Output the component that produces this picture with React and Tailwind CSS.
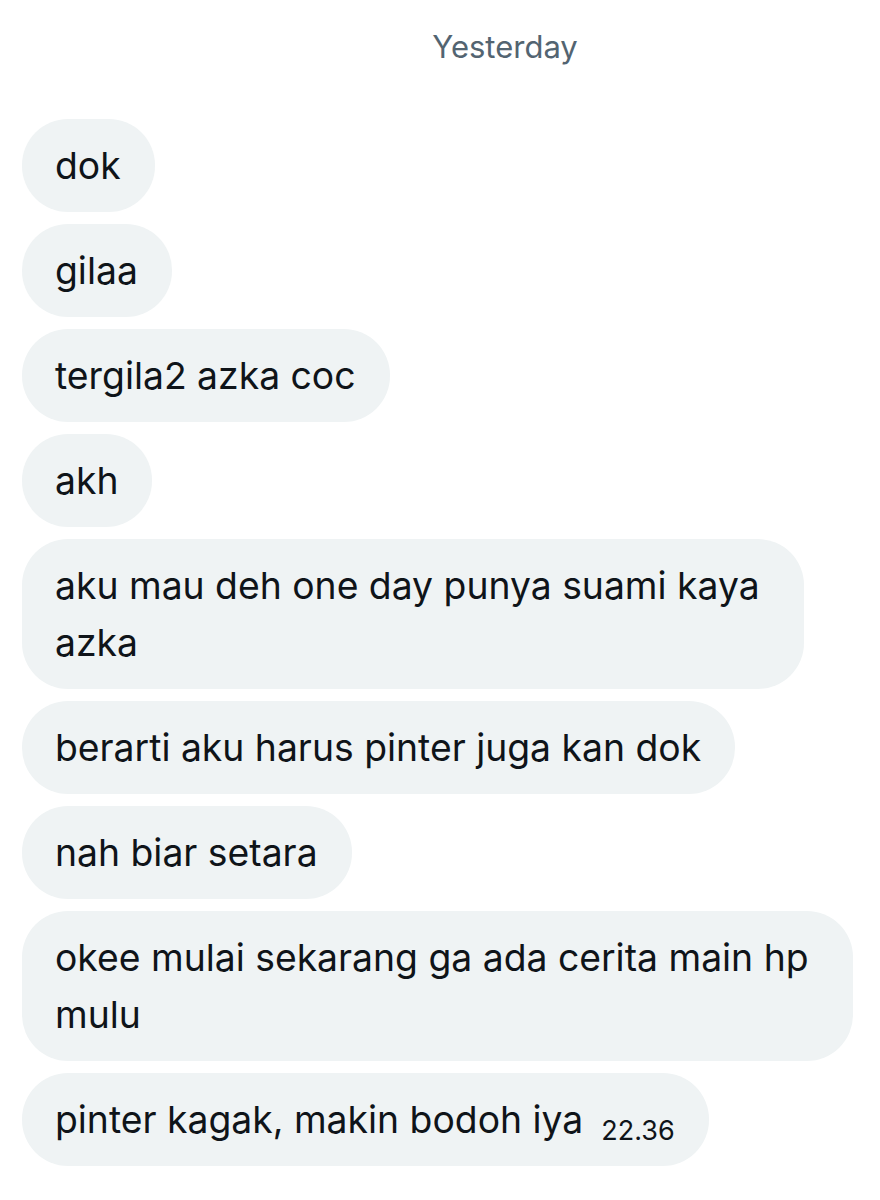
import React from "react";

const messages = [
  { t: ["dok"] },
  { t: ["gilaa"] },
  { t: ["tergila2 azka coc"] },
  { t: ["akh"] },
  { t: ["aku mau deh one day punya suami kaya", "azka"] },
  { t: ["berarti aku harus pinter juga kan dok"] },
  { t: ["nah biar setara"] },
  { t: ["okee mulai sekarang ga ada cerita main hp", "mulu"] },
];

export default function App() {
  return (
    <div
      className="w-[880px] h-[1200px] bg-white overflow-hidden"
      style={{ fontFamily: "Inter, 'Noto Sans', sans-serif" }}
    >
      <div className="flex justify-center pl-[130px] pt-[26px] h-[119px]">
        <span className="text-[31px] leading-[42px] text-[#536471]">Yesterday</span>
      </div>
      <div className="flex flex-col items-start gap-[12px] pl-[22px]">
        {messages.map((m, i) => (
          <div
            key={i}
            className={
              "rounded-[46px] bg-[#eff3f4] pl-[33px] py-[18px] text-[37.3px] leading-[57px] text-[#0f1419] whitespace-nowrap " +
              (m.t.length > 1 ? "pr-[44px]" : "pr-[34px]")
            }
          >
            {m.t.map((line, j) => (
              <div key={j}>{line}</div>
            ))}
          </div>
        ))}
        <div className="rounded-[46px] bg-[#eff3f4] pl-[33px] pr-[34px] py-[18px] text-[37.3px] leading-[57px] text-[#0f1419] whitespace-nowrap">
          pinter kagak, makin bodoh iya
          <span className="ml-[18px] text-[27px] leading-[24px] align-[-7px] text-[#0f1419]">22.36</span>
        </div>
      </div>
    </div>
  );
}
